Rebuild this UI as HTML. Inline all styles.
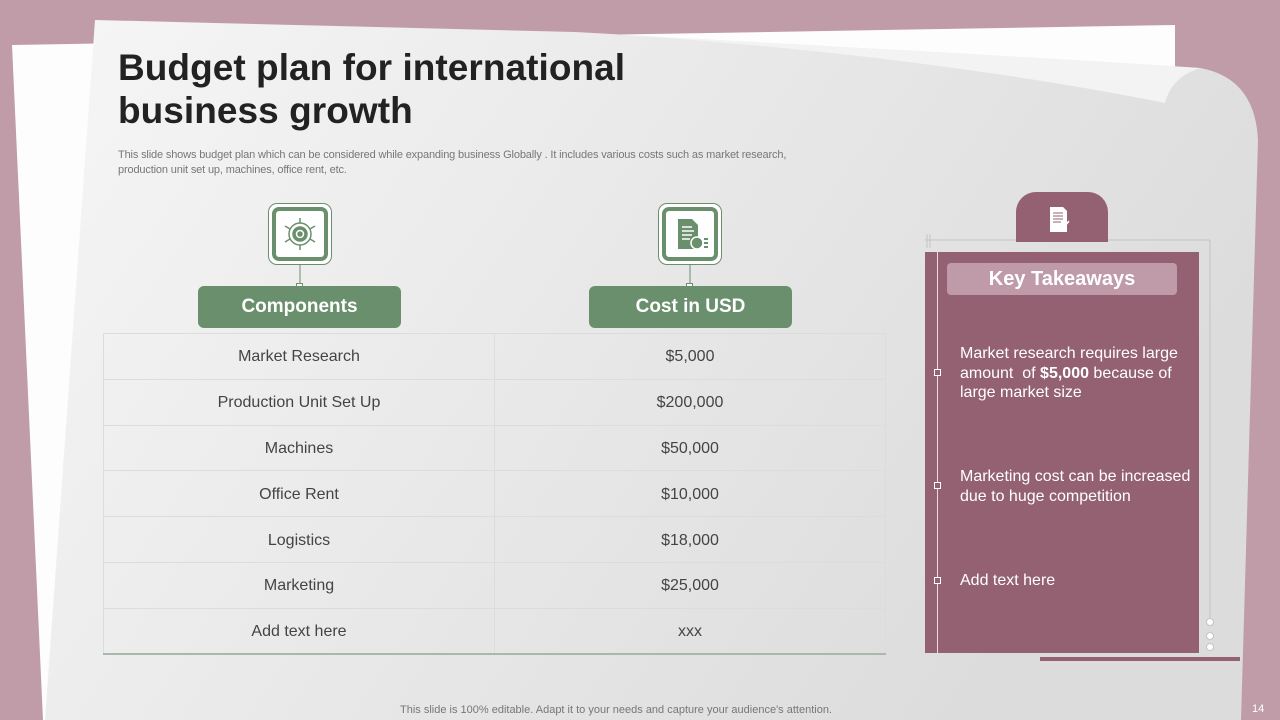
<!DOCTYPE html>
<html><head><meta charset="utf-8"><style>
*{margin:0;padding:0;box-sizing:border-box}
body{width:1280px;height:720px;overflow:hidden;background:#c09ca8;font-family:"Liberation Sans",sans-serif;position:relative}
.abs{position:absolute}
h1{position:absolute;left:118px;top:46px;font-size:37px;line-height:43px;font-weight:bold;color:#222;letter-spacing:0.05px}
.desc{left:118px;top:148px;font-size:11px;line-height:14.5px;color:#777;width:710px;letter-spacing:-0.15px}
table{position:absolute;left:103px;top:333px;width:783px;border-collapse:collapse}
td{height:45.8px;border:1px solid #dcdcdc;text-align:center;font-size:16px;color:#444;width:50%;padding-top:2px}
tr:last-child td{border-bottom:2px solid #a9b9a9}
.hdr{background:#6a8f6d;color:#fff;font-weight:bold;font-size:19px;border-radius:6px;width:203px;height:42px;top:286px;text-align:center;line-height:42px}
.ib{width:64px;height:62px;top:203px;border:1px solid #6a8f6d;border-radius:9px;background:#fff;padding:3px}
.ib>div{width:100%;height:100%;border:4px solid #6a8f6d;border-radius:7px;background:#fff;display:flex;align-items:center;justify-content:center}
.card{left:925px;top:252px;width:274px;height:401px;background:#946173}
.kt{left:947px;top:263px;width:230px;height:32px;background:#bf9aa8;border-radius:4px;color:#fff;font-weight:bold;font-size:20px;text-align:center;line-height:32px}
.pt{left:960px;color:#fff;font-size:16px;line-height:19.5px;width:235px}
.sq{left:934px;width:7px;height:7px;border:1px solid #fff;background:#946173}
</style></head><body>
<svg class="abs" style="left:0;top:0" width="1280" height="720">
<defs>
<linearGradient id="g" x1="0" y1="0" x2="1" y2="0.4"><stop offset="0" stop-color="#f6f6f6"/><stop offset="1" stop-color="#dcdcdc"/></linearGradient>
</defs>
<path d="M12 45 L1175 25 L1175 720 L43 720 Z" fill="#fdfdfd"/>
<path d="M95 20 L575 32 C800 45 1000 55 1200 68 Q1255 78 1258 140 L1241 720 L45 720 Z" fill="url(#g)"/>
<path d="M575 32 C800 45 1000 55 1200 68 C1180 75 1170 85 1165 103 C1000 70 800 45 575 32 Z" fill="#f3f3f3"/>
<line x1="925" y1="240" x2="1210" y2="240" stroke="#c4c4c4"/>
<line x1="927" y1="234" x2="927" y2="248" stroke="#c4c4c4"/>
<line x1="930" y1="234" x2="930" y2="248" stroke="#c4c4c4"/>
<line x1="1210" y1="240" x2="1210" y2="618" stroke="#c4c4c4"/>
<circle cx="1210" cy="622" r="3.5" fill="#fff" stroke="#c4c4c4"/>
<circle cx="1210" cy="636" r="3.5" fill="#fff" stroke="#c4c4c4"/>
<circle cx="1210" cy="647" r="3.5" fill="#fff" stroke="#c4c4c4"/>
<line x1="300" y1="265" x2="300" y2="287" stroke="#6a8f6d"/>
<line x1="690" y1="265" x2="690" y2="287" stroke="#6a8f6d"/>
</svg>
<h1>Budget plan for international<br>business growth</h1>
<div class="abs desc">This slide shows budget plan which can be considered while expanding business Globally . It includes various costs such as market research, production unit set up, machines, office rent, etc.</div>

<div class="abs ib" style="left:268px"><div>
<svg width="40" height="40" viewBox="0 0 40 40" fill="none" stroke="#6a8f6d" stroke-width="1.5"><circle cx="20" cy="20" r="11"/><circle cx="20" cy="20" r="6" stroke-width="3.5"/><circle cx="20" cy="20" r="2" fill="#6a8f6d"/><path d="M20 4v5M20 31v5M5 12l5 3M35 12l-5 3M5 28l5-3M35 28l-5-3"/></svg></div></div>
<div class="abs ib" style="left:658px"><div>
<svg width="40" height="40" viewBox="0 0 40 40"><path d="M8 5h14l6 6v24H8z" fill="#6a8f6d"/><path d="M12 13h10M12 17h12M12 21h10M12 25h8" stroke="#fff" stroke-width="1.5"/><circle cx="27" cy="29" r="6" fill="#6a8f6d" stroke="#fff" stroke-width="1.5"/><path d="M34 25h4M34 29h4M34 33h4" stroke="#6a8f6d" stroke-width="2"/></svg></div></div>
<div class="abs" style="left:296px;top:283px;width:7px;height:7px;background:#fff;border:1px solid #6a8f6d"></div>
<div class="abs" style="left:686px;top:283px;width:7px;height:7px;background:#fff;border:1px solid #6a8f6d"></div>
<div class="abs hdr" style="left:198px">Components</div>
<div class="abs hdr" style="left:589px">Cost in USD</div>

<table>
<tr><td>Market Research</td><td>$5,000</td></tr>
<tr><td>Production Unit Set Up</td><td>$200,000</td></tr>
<tr><td>Machines</td><td>$50,000</td></tr>
<tr><td>Office Rent</td><td>$10,000</td></tr>
<tr><td>Logistics</td><td>$18,000</td></tr>
<tr><td>Marketing</td><td>$25,000</td></tr>
<tr><td>Add text here</td><td>xxx</td></tr>
</table>

<div class="abs" style="left:1016px;top:192px;width:92px;height:50px;background:#946173;border-radius:20px 20px 0 0"></div>
<svg class="abs" style="left:1048px;top:206px" width="26" height="28" viewBox="0 0 26 28"><path d="M2 1h13l4 4v21H2z" fill="#fff"/><path d="M5 7h10M5 10h10M5 13h10M5 16h8" stroke="#946173" stroke-width="1"/><path d="M14 24l7-9" stroke="#fff" stroke-width="1.5"/></svg>
<div class="abs card"></div>
<div class="abs" style="left:937px;top:252px;width:1px;height:401px;background:#e9dbe0"></div>
<div class="abs kt">Key Takeaways</div>
<div class="abs sq" style="top:369px"></div>
<div class="abs sq" style="top:482px"></div>
<div class="abs sq" style="top:577px"></div>
<div class="abs pt" style="top:344px">Market research requires large amount&nbsp; of <b>$5,000</b> because of large market size</div>
<div class="abs pt" style="top:467px">Marketing cost can be increased due to huge competition</div>
<div class="abs pt" style="top:571px">Add text here</div>
<div class="abs" style="left:1040px;top:657px;width:200px;height:4px;background:#946173"></div>

<div class="abs" style="left:400px;top:704px;font-size:11px;color:#777">This slide is 100% editable. Adapt it to your needs and capture your audience's attention.</div>
<div class="abs" style="left:1252px;top:703px;font-size:11px;color:#fff">14</div>
</body></html>
